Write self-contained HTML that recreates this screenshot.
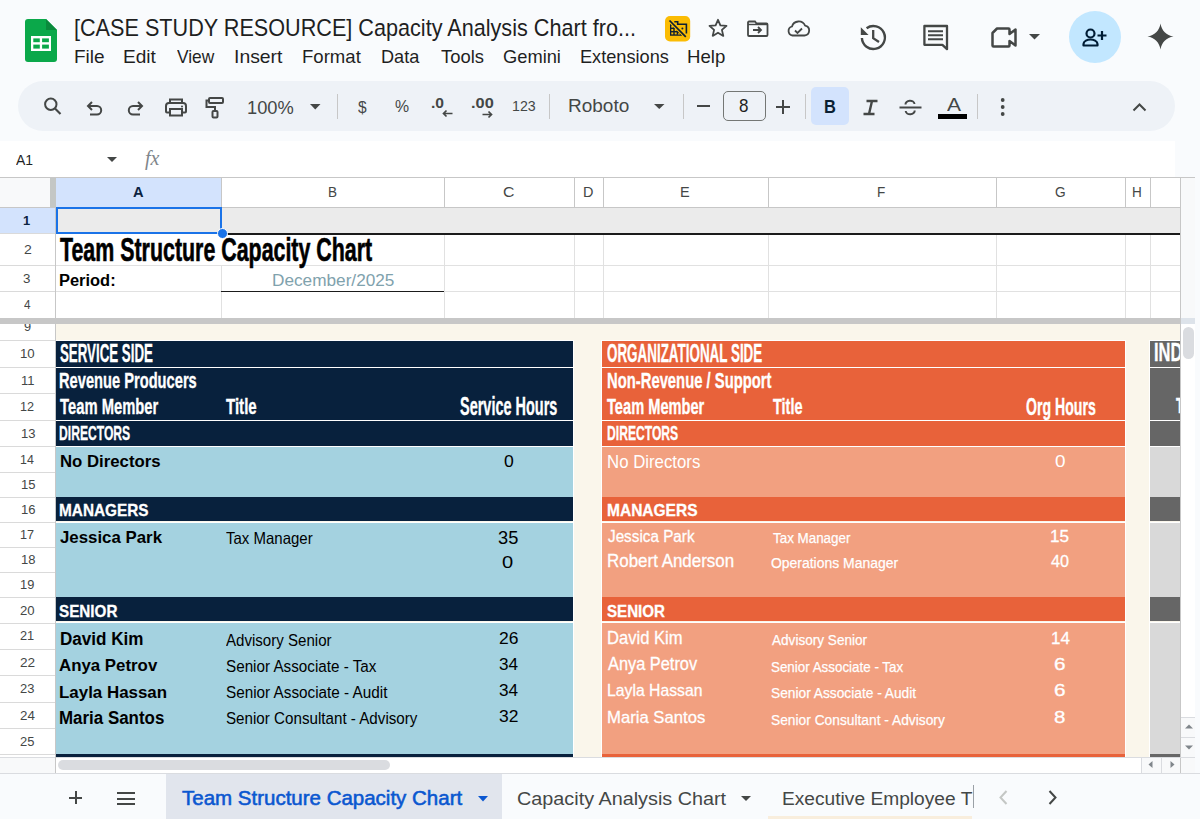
<!DOCTYPE html><html><head><meta charset='utf-8'><title>Sheets</title><style>
*{margin:0;padding:0;box-sizing:border-box}
html,body{width:1200px;height:819px;overflow:hidden;background:#f9fbfd;font-family:"Liberation Sans", sans-serif;position:relative}
.a{position:absolute}
.t{position:absolute;white-space:nowrap;line-height:1;transform-origin:0 0}
svg{position:absolute;overflow:visible}
</style></head><body>
<svg style='left:25px;top:19px' width='32' height='43' viewBox='0 0 32 43'>
<path d='M3 0 H21 L32 11 V40 a3 3 0 0 1 -3 3 H3 a3 3 0 0 1 -3 -3 V3 a3 3 0 0 1 3 -3z' fill='#0ba84a'/>
<path d='M21 0 L32 11 H21z' fill='#0a8a3c'/>
<rect x='6' y='17' width='20' height='15' fill='#fff'/>
<rect x='8.3' y='19.4' width='6.5' height='3.8' fill='#0ba84a'/><rect x='17.1' y='19.4' width='6.8' height='3.8' fill='#0ba84a'/>
<rect x='8.3' y='25.6' width='6.5' height='4' fill='#0ba84a'/><rect x='17.1' y='25.6' width='6.8' height='4' fill='#0ba84a'/>
</svg>
<div class='t' style='left:73.69px;top:15.54px;font-size:23.84px;color:#1f1f1f;font-weight:normal;transform:scaleX(0.9074);'>[CASE STUDY RESOURCE] Capacity Analysis Chart fro...</div>
<div class='t' style='left:74.26px;top:48.19px;font-size:18.60px;color:#1f1f1f;font-weight:normal;transform:scaleX(1.0214);'>File</div>
<div class='t' style='left:123.47px;top:48.19px;font-size:18.60px;color:#1f1f1f;font-weight:normal;transform:scaleX(1.0262);'>Edit</div>
<div class='t' style='left:176.70px;top:48.19px;font-size:18.60px;color:#1f1f1f;font-weight:normal;transform:scaleX(0.9324);'>View</div>
<div class='t' style='left:233.65px;top:48.19px;font-size:18.60px;color:#1f1f1f;font-weight:normal;transform:scaleX(1.0416);'>Insert</div>
<div class='t' style='left:301.50px;top:48.19px;font-size:18.60px;color:#1f1f1f;font-weight:normal;transform:scaleX(0.9984);'>Format</div>
<div class='t' style='left:380.74px;top:48.19px;font-size:18.60px;color:#1f1f1f;font-weight:normal;transform:scaleX(0.9746);'>Data</div>
<div class='t' style='left:440.63px;top:48.19px;font-size:18.60px;color:#1f1f1f;font-weight:normal;transform:scaleX(0.9901);'>Tools</div>
<div class='t' style='left:503.09px;top:48.19px;font-size:18.60px;color:#1f1f1f;font-weight:normal;transform:scaleX(0.9835);'>Gemini</div>
<div class='t' style='left:579.74px;top:48.19px;font-size:18.60px;color:#1f1f1f;font-weight:normal;transform:scaleX(0.9771);'>Extensions</div>
<div class='t' style='left:687.32px;top:48.19px;font-size:18.60px;color:#1f1f1f;font-weight:normal;transform:scaleX(1.0008);'>Help</div>
<svg style='left:665px;top:15.8px' width='25.2' height='25.4' viewBox='0 0 25.2 25.4'><rect x='0' y='0' width='25.2' height='25.4' rx='5' fill='#fbbc04'/><path d='M5 7.6V19.8H17.2z' fill='#0f1f33'/><g fill='#fbbc04'><rect x='6.3' y='9.6' width='2' height='2'/><rect x='6.3' y='13' width='2' height='2'/><rect x='9.7' y='13' width='2' height='2'/><rect x='6.3' y='16.4' width='2' height='2'/><rect x='9.7' y='16.4' width='2' height='2'/><path d='M12.6 18.4h2.8l-1.4-1.8z'/></g><path d='M3.8 4.8L21 21' stroke='#fbbc04' stroke-width='2.6'/><path d='M4.5 4.5L20.8 20.8' stroke='#0f1f33' stroke-width='1.7'/><path d='M9.3 5.7H12.7V8.3H21.4V17.6' fill='none' stroke='#0f1f33' stroke-width='1.6'/><circle cx='17.4' cy='12.5' r='1' fill='#0f1f33'/></svg>
<svg style='left:708px;top:18px' width='20' height='20' viewBox='0 0 20 20'><path d='M10 1.8 L12.4 7.4 L18.5 7.9 L13.9 11.9 L15.3 17.9 L10 14.7 L4.7 17.9 L6.1 11.9 L1.5 7.9 L7.6 7.4z' fill='none' stroke='#444746' stroke-width='1.8' stroke-linejoin='round'/></svg>
<svg style='left:747px;top:20px' width='22' height='17' viewBox='0 0 22 17'><path d='M2 1.5h6l1.5 2h10a1 1 0 0 1 1 1V15a1 1 0 0 1-1 1H2a1 1 0 0 1-1-1V2.5a1 1 0 0 1 1-1z' fill='none' stroke='#444746' stroke-width='1.8'/><path d='M1 4.5h19' stroke='#444746' stroke-width='1.4'/><path d='M6 10h8M11 7l3 3-3 3' fill='none' stroke='#444746' stroke-width='1.8'/></svg>
<svg style='left:786px;top:20px' width='25' height='17' viewBox='0 0 25 17'><path d='M6.5 15.5h12a5 5 0 0 0 .6-9.9A7 7 0 0 0 6 6.5a4.6 4.6 0 0 0 .5 9z' fill='none' stroke='#444746' stroke-width='1.8' stroke-linejoin='round'/><path d='M9 10.5l2.5 2.5 4.5-4.5' fill='none' stroke='#444746' stroke-width='1.8'/></svg>
<svg style='left:859px;top:23px' width='28' height='28' viewBox='0 0 28 28'><path d='M2.9 15A11.5 11.5 0 1 0 7.6 5.2' fill='none' stroke='#444746' stroke-width='2.4'/><path d='M1.8 4.2V12H9.6z' fill='#444746'/><path d='M14.2 7V15.2l5.8 3.8' fill='none' stroke='#444746' stroke-width='2.3'/></svg>
<svg style='left:922px;top:24px' width='27' height='27' viewBox='0 0 27 27'><path d='M2.4 2H25V25.2L20.4 20.8H2.4z' fill='none' stroke='#444746' stroke-width='2.3' stroke-linejoin='round'/><path d='M6 7.2h15M6 11.2h15M6 15.2h15' stroke='#444746' stroke-width='2'/></svg>
<svg style='left:991px;top:27px' width='27' height='21' viewBox='0 0 27 21'><path d='M6 1.5h11.5a1 1 0 0 1 1 1V7l6-4.5V18.5l-6-4.5v4.5a1 1 0 0 1-1 1H2.5a1 1 0 0 1-1-1V6z' fill='none' stroke='#444746' stroke-width='2.5' stroke-linejoin='round'/></svg>
<svg style='left:1029px;top:34px' width='11' height='6' viewBox='0 0 11 6'><path d='M0 0h11L5.5 5.5z' fill='#444746'/></svg>
<div class='a' style='left:1068.5px;top:11px;width:52px;height:52px;border-radius:50%;background:#c2e7ff'></div>
<svg style='left:1082px;top:28px' width='26' height='20' viewBox='0 0 26 20'><circle cx='8.5' cy='5.5' r='4' fill='none' stroke='#001d35' stroke-width='2.2'/><path d='M1.5 17.5v-1.5c0-3 4-4.5 7-4.5s7 1.5 7 4.5v1.5z' fill='none' stroke='#001d35' stroke-width='2.2' stroke-linejoin='round'/><path d='M20 3v9M15.5 7.5h9' stroke='#001d35' stroke-width='2.2'/></svg>
<svg style='left:1147px;top:23px' width='27' height='27' viewBox='0 0 27 27'><path d='M13.5 0.5C14.5 7.5 19.5 12.5 26.5 13.5C19.5 14.5 14.5 19.5 13.5 26.5C12.5 19.5 7.5 14.5 0.5 13.5C7.5 12.5 12.5 7.5 13.5 0.5z' fill='#444746'/></svg>
<div class='a' style='left:18px;top:81px;width:1157px;height:50px;border-radius:25px;background:#eef2f7'></div>
<svg style='left:42px;top:96px' width='20' height='20' viewBox='0 0 20 20'><circle cx='8.8' cy='8.2' r='5.7' fill='none' stroke='#444746' stroke-width='2'/><path d='M13 12.5L18.5 18' stroke='#444746' stroke-width='2.1'/></svg>
<svg style='left:86px;top:100px' width='18' height='16' viewBox='0 0 18 16'><path d='M2.5 6H11a4.2 4.2 0 0 1 0 8.4H4' fill='none' stroke='#444746' stroke-width='2'/><path d='M6 2L2 6l4 4' fill='none' stroke='#444746' stroke-width='2'/></svg>
<svg style='left:126px;top:100px' width='18' height='16' viewBox='0 0 18 16'><path d='M15.5 6H7a4.2 4.2 0 0 0 0 8.4H14' fill='none' stroke='#444746' stroke-width='2'/><path d='M12 2l4 4-4 4' fill='none' stroke='#444746' stroke-width='2'/></svg>
<svg style='left:165px;top:98px' width='22' height='19' viewBox='0 0 22 19'><path d='M5 5V1.5h12V5' fill='none' stroke='#444746' stroke-width='2'/><path d='M4.5 14.5H2a1 1 0 0 1-1-1V8a3 3 0 0 1 3-3h14a3 3 0 0 1 3 3v5.5a1 1 0 0 1-1 1h-2.5' fill='none' stroke='#444746' stroke-width='2'/><rect x='5' y='11' width='12' height='6.5' fill='none' stroke='#444746' stroke-width='2'/><circle cx='17' cy='8.5' r='1' fill='#444746'/></svg>
<svg style='left:205px;top:97px' width='19' height='22' viewBox='0 0 19 22'><rect x='4' y='1' width='14' height='5' rx='1' fill='none' stroke='#444746' stroke-width='2'/><path d='M4 3.5H1.5V10H10V14' fill='none' stroke='#444746' stroke-width='2'/><rect x='7.5' y='14' width='5' height='6.5' rx='1' fill='none' stroke='#444746' stroke-width='2'/></svg>
<div class='t' style='left:247.02px;top:97.69px;font-size:19.19px;color:#444746;font-weight:normal;transform:scaleX(0.9533);'>100%</div>
<svg style='left:310px;top:103.5px' width='10.5' height='6' viewBox='0 0 10.5 6'><path d='M0 0h10.5L5.25 5.5z' fill='#444746'/></svg>
<div class='a' style='left:336.5px;top:94px;width:1px;height:25px;background:#c7c7c7;'></div>
<div class='a' style='left:549.0px;top:94px;width:1px;height:25px;background:#c7c7c7;'></div>
<div class='a' style='left:683.0px;top:94px;width:1px;height:25px;background:#c7c7c7;'></div>
<div class='a' style='left:805.0px;top:94px;width:1px;height:25px;background:#c7c7c7;'></div>
<div class='a' style='left:977.0px;top:94px;width:1px;height:25px;background:#c7c7c7;'></div>
<div class='t' style='left:357.82px;top:99.36px;font-size:16.05px;color:#444746;font-weight:normal;transform:scaleX(0.9673);'>$</div>
<div class='t' style='left:394.65px;top:97.86px;font-size:16.29px;color:#444746;font-weight:normal;transform:scaleX(0.9735);'>%</div>
<div class='t' style='left:430.81px;top:96.16px;font-size:14.29px;color:#444746;font-weight:bold;transform:scaleX(1.0961);'>.0</div>
<svg style='left:442px;top:110px' width='11' height='7' viewBox='0 0 11 7'><path d='M10.5 3.5H1.5M4.5 0.5l-3 3 3 3' fill='none' stroke='#444746' stroke-width='1.7'/></svg>
<div class='t' style='left:470.94px;top:96.16px;font-size:14.29px;color:#444746;font-weight:bold;transform:scaleX(1.1440);'>.00</div>
<svg style='left:482px;top:110.5px' width='11' height='7' viewBox='0 0 11 7'><path d='M0.5 3.5H9.5M6.5 0.5l3 3-3 3' fill='none' stroke='#444746' stroke-width='1.7'/></svg>
<div class='t' style='left:511.94px;top:98.66px;font-size:14.29px;color:#444746;font-weight:normal;transform:scaleX(0.9935);'>123</div>
<div class='t' style='left:568.46px;top:96.56px;font-size:18.17px;color:#444746;font-weight:normal;transform:scaleX(1.0465);'>Roboto</div>
<svg style='left:654px;top:103.5px' width='10.5' height='5' viewBox='0 0 10.5 5'><path d='M0 0h10.5L5.25 5z' fill='#444746'/></svg>
<div class='a' style='left:697px;top:104.5px;width:13px;height:2px;background:#444746;'></div>
<div class='a' style='left:723px;top:91px;width:43px;height:29.5px;border:1px solid #747775;border-radius:5px'></div>
<div class='t' style='left:739.23px;top:96.71px;font-size:18.57px;color:#1f1f1f;font-weight:normal;transform:scaleX(0.9165);'>8</div>
<div class='a' style='left:776px;top:106px;width:14px;height:2px;background:#444746;'></div>
<div class='a' style='left:782px;top:100px;width:2px;height:14px;background:#444746;'></div>
<div class='a' style='left:811px;top:87px;width:38px;height:38px;border-radius:5px;background:#d3e3fd'></div>
<div class='t' style='left:823.88px;top:97.56px;font-size:18.17px;color:#0b1f33;font-weight:bold;transform:scaleX(0.9064);'>B</div>
<svg style='left:862px;top:99px' width='17' height='17' viewBox='0 0 17 17'><path d='M4.5 2h11M1.5 15h11M10 2L7 15' fill='none' stroke='#444746' stroke-width='2.4'/></svg>
<svg style='left:899px;top:99px' width='23' height='18' viewBox='0 0 23 18'><path d='M0.5 8.5h22' stroke='#444746' stroke-width='2'/><path d='M6.5 5.5a4.5 3.5 0 0 1 9-0.5M15.7 11.5a4.5 3.5 0 0 1-9 0.5' fill='none' stroke='#444746' stroke-width='2'/></svg>
<div class='t' style='left:947.00px;top:97.17px;font-size:17.44px;color:#444746;font-weight:normal;transform:scaleX(1.2070);'>A</div>
<div class='a' style='left:938px;top:113.5px;width:29px;height:5.5px;background:#000;'></div>
<svg style='left:1000px;top:97px' width='6' height='20' viewBox='0 0 6 20'><circle cx='2.7' cy='3' r='1.9' fill='#444746'/><circle cx='2.7' cy='10' r='1.9' fill='#444746'/><circle cx='2.7' cy='17' r='1.9' fill='#444746'/></svg>
<svg style='left:1132px;top:103px' width='15' height='9' viewBox='0 0 15 9'><path d='M1.5 7.5l6-6 6 6' fill='none' stroke='#444746' stroke-width='2'/></svg>
<div class='a' style='left:0px;top:141px;width:1175px;height:36px;background:#ffffff;'></div>
<div class='t' style='left:15.80px;top:152.72px;font-size:14.10px;color:#1f1f1f;font-weight:normal;transform:scaleX(0.9902);'>A1</div>
<svg style='left:106.5px;top:157px' width='10' height='5.5' viewBox='0 0 10 5.5'><path d='M0 0h10L5 5z' fill='#444746'/></svg>
<div class='t' style='left:145px;top:148px;font-family:"Liberation Serif",serif;font-style:italic;font-size:20px;color:#80868b'>fx</div>
<div class='a' style='left:0px;top:177px;width:1195px;height:1px;background:#c7c7c7;'></div>
<div class='a' style='left:0px;top:178px;width:1180px;height:29px;background:#ffffff;'></div>
<div class='a' style='left:0px;top:178px;width:50px;height:29px;background:#f8f9fa;'></div>
<div class='a' style='left:50px;top:178px;width:6px;height:29px;background:#c4c7c5;'></div>
<div class='a' style='left:56px;top:178px;width:165px;height:29px;background:#d3e3fd;'></div>
<div class='a' style='left:220.5px;top:178px;width:1px;height:29px;background:#c7c7c7;'></div>
<div class='a' style='left:443.5px;top:178px;width:1px;height:29px;background:#c7c7c7;'></div>
<div class='a' style='left:573.5px;top:178px;width:1px;height:29px;background:#c7c7c7;'></div>
<div class='a' style='left:602.5px;top:178px;width:1px;height:29px;background:#c7c7c7;'></div>
<div class='a' style='left:767.5px;top:178px;width:1px;height:29px;background:#c7c7c7;'></div>
<div class='a' style='left:995.5px;top:178px;width:1px;height:29px;background:#c7c7c7;'></div>
<div class='a' style='left:1124.5px;top:178px;width:1px;height:29px;background:#c7c7c7;'></div>
<div class='a' style='left:1149.5px;top:178px;width:1px;height:29px;background:#c7c7c7;'></div>
<div class='a' style='left:1179.5px;top:178px;width:1px;height:29px;background:#c7c7c7;'></div>
<div class='a' style='left:0px;top:207px;width:1180px;height:1px;background:#c7c7c7;'></div>
<div class='a' style='left:1180px;top:178px;width:15px;height:579px;background:#f8f9fa;'></div>
<div class='a' style='left:1180px;top:177px;width:1px;height:580px;background:#c7c7c7;'></div>
<div class='a' style='left:0px;top:208px;width:55px;height:549px;background:#ffffff;'></div>
<div class='a' style='left:55px;top:208px;width:1px;height:549px;background:#c7c7c7;'></div>
<div class='a' style='left:0px;top:208px;width:55px;height:25.5px;background:#d3e3fd;'></div>
<div class='a' style='left:56px;top:208px;width:1124px;height:25px;background:#ebebeb;'></div>
<div class='a' style='left:56px;top:233.5px;width:1124px;height:85px;background:#ffffff;'></div>
<div class='a' style='left:0px;top:233.0px;width:55px;height:1px;background:#dadada;'></div>
<div class='a' style='left:0px;top:264.5px;width:55px;height:1px;background:#dadada;'></div>
<div class='a' style='left:0px;top:291.0px;width:55px;height:1px;background:#dadada;'></div>
<div class='a' style='left:56px;top:264.5px;width:1124px;height:1px;background:#e1e1e1;'></div>
<div class='a' style='left:56px;top:291.0px;width:1124px;height:1px;background:#e1e1e1;'></div>
<div class='a' style='left:443.5px;top:235px;width:1px;height:83px;background:#e1e1e1;'></div>
<div class='a' style='left:573.5px;top:235px;width:1px;height:83px;background:#e1e1e1;'></div>
<div class='a' style='left:602.5px;top:235px;width:1px;height:83px;background:#e1e1e1;'></div>
<div class='a' style='left:767.5px;top:235px;width:1px;height:83px;background:#e1e1e1;'></div>
<div class='a' style='left:995.5px;top:235px;width:1px;height:83px;background:#e1e1e1;'></div>
<div class='a' style='left:1124.5px;top:235px;width:1px;height:83px;background:#e1e1e1;'></div>
<div class='a' style='left:1149.5px;top:235px;width:1px;height:83px;background:#e1e1e1;'></div>
<div class='a' style='left:220.5px;top:265px;width:1px;height:53px;background:#e1e1e1;'></div>
<div class='a' style='left:221px;top:232.5px;width:959px;height:2px;background:#1b1b1b;'></div>
<div class='a' style='left:221px;top:290.5px;width:223px;height:1.6px;background:#1b1b1b;'></div>
<div class='a' style='left:0px;top:318px;width:1180px;height:6px;background:#c7c7c7;'></div>
<div class='a' style='left:1181px;top:318px;width:14px;height:6px;background:#dde3ea;'></div>
<div class='a' style='left:56px;top:324px;width:1124px;height:433px;background:#faf6eb;'></div>
<div class='a' style='left:1181px;top:324px;width:14px;height:433px;background:#ffffff;'></div>
<div class='a' style='left:0px;top:340.0px;width:55px;height:1px;background:#dadada;'></div>
<div class='a' style='left:0px;top:366.5px;width:55px;height:1px;background:#dadada;'></div>
<div class='a' style='left:0px;top:393.0px;width:55px;height:1px;background:#dadada;'></div>
<div class='a' style='left:0px;top:419.5px;width:55px;height:1px;background:#dadada;'></div>
<div class='a' style='left:0px;top:446.0px;width:55px;height:1px;background:#dadada;'></div>
<div class='a' style='left:0px;top:471.5px;width:55px;height:1px;background:#dadada;'></div>
<div class='a' style='left:0px;top:496.5px;width:55px;height:1px;background:#dadada;'></div>
<div class='a' style='left:0px;top:522.0px;width:55px;height:1px;background:#dadada;'></div>
<div class='a' style='left:0px;top:547.0px;width:55px;height:1px;background:#dadada;'></div>
<div class='a' style='left:0px;top:572.0px;width:55px;height:1px;background:#dadada;'></div>
<div class='a' style='left:0px;top:597.0px;width:55px;height:1px;background:#dadada;'></div>
<div class='a' style='left:0px;top:622.5px;width:55px;height:1px;background:#dadada;'></div>
<div class='a' style='left:0px;top:648.5px;width:55px;height:1px;background:#dadada;'></div>
<div class='a' style='left:0px;top:675.0px;width:55px;height:1px;background:#dadada;'></div>
<div class='a' style='left:0px;top:701.5px;width:55px;height:1px;background:#dadada;'></div>
<div class='a' style='left:0px;top:728.0px;width:55px;height:1px;background:#dadada;'></div>
<div class='a' style='left:0px;top:754.0px;width:55px;height:1px;background:#dadada;'></div>
<div class='t' style='left:23.19px;top:215.28px;font-size:12.79px;color:#0b2341;font-weight:bold;transform:scaleX(1.0088);'>1</div>
<div class='t' style='left:23.54px;top:243.78px;font-size:12.79px;color:#444746;font-weight:normal;transform:scaleX(1.0983);'>2</div>
<div class='t' style='left:23.29px;top:272.78px;font-size:12.79px;color:#444746;font-weight:normal;transform:scaleX(1.0413);'>3</div>
<div class='t' style='left:23.87px;top:299.28px;font-size:12.79px;color:#444746;font-weight:normal;transform:scaleX(0.9193);'>4</div>
<div class='a' style='left:0;top:324px;width:55px;height:16px;overflow:hidden'><div class='t' style='left:23.95px;top:-3.23px;font-size:12.8px;color:#444746'>9</div></div>
<div class='t' style='left:20.42px;top:348.28px;font-size:12.79px;color:#444746;font-weight:normal;transform:scaleX(1.0349);'>10</div>
<div class='t' style='left:20.63px;top:374.78px;font-size:12.79px;color:#444746;font-weight:normal;transform:scaleX(1.0150);'>11</div>
<div class='t' style='left:19.86px;top:401.28px;font-size:12.79px;color:#444746;font-weight:normal;transform:scaleX(0.9890);'>12</div>
<div class='t' style='left:20.56px;top:427.78px;font-size:12.79px;color:#444746;font-weight:normal;transform:scaleX(1.0194);'>13</div>
<div class='t' style='left:20.34px;top:453.78px;font-size:12.79px;color:#444746;font-weight:normal;transform:scaleX(0.9696);'>14</div>
<div class='t' style='left:20.56px;top:479.03px;font-size:12.79px;color:#444746;font-weight:normal;transform:scaleX(1.0194);'>15</div>
<div class='t' style='left:20.56px;top:504.28px;font-size:12.79px;color:#444746;font-weight:normal;transform:scaleX(1.0194);'>16</div>
<div class='t' style='left:19.86px;top:528.53px;font-size:12.79px;color:#444746;font-weight:normal;transform:scaleX(0.9890);'>17</div>
<div class='t' style='left:20.56px;top:553.53px;font-size:12.79px;color:#444746;font-weight:normal;transform:scaleX(1.0194);'>18</div>
<div class='t' style='left:19.72px;top:578.53px;font-size:12.79px;color:#444746;font-weight:normal;transform:scaleX(1.0041);'>19</div>
<div class='t' style='left:20.10px;top:604.78px;font-size:12.79px;color:#444746;font-weight:normal;transform:scaleX(1.0287);'>20</div>
<div class='t' style='left:20.38px;top:629.53px;font-size:12.79px;color:#444746;font-weight:normal;transform:scaleX(0.9989);'>21</div>
<div class='t' style='left:20.47px;top:656.78px;font-size:12.79px;color:#444746;font-weight:normal;transform:scaleX(1.0662);'>22</div>
<div class='t' style='left:20.24px;top:683.28px;font-size:12.79px;color:#444746;font-weight:normal;transform:scaleX(1.0137);'>23</div>
<div class='t' style='left:19.96px;top:709.78px;font-size:12.79px;color:#444746;font-weight:normal;transform:scaleX(1.0438);'>24</div>
<div class='t' style='left:20.24px;top:736.03px;font-size:12.79px;color:#444746;font-weight:normal;transform:scaleX(1.0137);'>25</div>
<div class='t' style='left:132.75px;top:185.12px;font-size:14.10px;color:#0b2341;font-weight:bold;transform:scaleX(1.0406);'>A</div>
<div class='t' style='left:327.78px;top:185.12px;font-size:14.10px;color:#444746;font-weight:normal;transform:scaleX(0.9579);'>B</div>
<div class='t' style='left:503.19px;top:185.12px;font-size:14.10px;color:#444746;font-weight:normal;transform:scaleX(1.1212);'>C</div>
<div class='t' style='left:583.02px;top:185.12px;font-size:14.10px;color:#444746;font-weight:normal;transform:scaleX(1.0249);'>D</div>
<div class='t' style='left:680.39px;top:185.12px;font-size:14.10px;color:#444746;font-weight:normal;transform:scaleX(1.0287);'>E</div>
<div class='t' style='left:877.11px;top:185.12px;font-size:14.10px;color:#444746;font-weight:normal;transform:scaleX(0.9613);'>F</div>
<div class='t' style='left:1054.86px;top:185.12px;font-size:14.10px;color:#444746;font-weight:normal;transform:scaleX(0.9723);'>G</div>
<div class='t' style='left:1132.13px;top:185.12px;font-size:14.10px;color:#444746;font-weight:normal;transform:scaleX(0.9613);'>H</div>
<div class='a' style='left:56px;top:207px;width:166px;height:27px;border:2.5px solid #1a73e8'></div>
<div class='a' style='left:216.5px;top:228px;width:11px;height:11px;border-radius:50%;background:#1a73e8;border:1px solid #fff'></div>
<div class='t' style='left:59.79px;top:231.79px;font-size:34.01px;color:#000;font-weight:bold;transform:scaleX(0.6290);-webkit-text-stroke:0.6px #000;'>Team Structure Capacity Chart</div>
<div class='t' style='left:58.73px;top:271.89px;font-size:16.13px;color:#000;font-weight:bold;transform:scaleX(1.0204);'>Period:</div>
<div class='t' style='left:271.62px;top:272.82px;font-size:16.57px;color:#7fa2ad;font-weight:normal;transform:scaleX(1.0388);'>December/2025</div>
<div class='a' style='left:56px;top:340px;width:517px;height:1px;background:#ffffff;'></div>
<div class='a' style='left:56px;top:341px;width:517px;height:25.5px;background:#08213d;'></div>
<div class='a' style='left:56px;top:366.5px;width:517px;height:1.5px;background:#ffffff;'></div>
<div class='a' style='left:56px;top:368px;width:517px;height:51.5px;background:#08213d;'></div>
<div class='a' style='left:56px;top:419.5px;width:517px;height:1.5px;background:#ffffff;'></div>
<div class='a' style='left:56px;top:421px;width:517px;height:24.8px;background:#08213d;'></div>
<div class='a' style='left:56px;top:445.8px;width:517px;height:1.4px;background:#ffffff;'></div>
<div class='a' style='left:56px;top:447.2px;width:517px;height:49.4px;background:#a4d2e0;'></div>
<div class='a' style='left:56px;top:496.6px;width:517px;height:24.9px;background:#08213d;'></div>
<div class='a' style='left:56px;top:521.5px;width:517px;height:1.5px;background:#ffffff;'></div>
<div class='a' style='left:56px;top:523px;width:517px;height:74.3px;background:#a4d2e0;'></div>
<div class='a' style='left:56px;top:597.3px;width:517px;height:24.2px;background:#08213d;'></div>
<div class='a' style='left:56px;top:621.5px;width:517px;height:1.5px;background:#ffffff;'></div>
<div class='a' style='left:56px;top:623px;width:517px;height:131.3px;background:#a4d2e0;'></div>
<div class='a' style='left:56px;top:754.3px;width:517px;height:2.7px;background:#08213d;'></div>
<div class='a' style='left:573px;top:340px;width:1px;height:417px;background:#ffffff;'></div>
<div class='a' style='left:602px;top:340px;width:522.5px;height:1px;background:#ffffff;'></div>
<div class='a' style='left:602px;top:341px;width:522.5px;height:25.5px;background:#e8623a;'></div>
<div class='a' style='left:602px;top:366.5px;width:522.5px;height:1.5px;background:#ffffff;'></div>
<div class='a' style='left:602px;top:368px;width:522.5px;height:51.5px;background:#e8623a;'></div>
<div class='a' style='left:602px;top:419.5px;width:522.5px;height:1.5px;background:#ffffff;'></div>
<div class='a' style='left:602px;top:421px;width:522.5px;height:24.8px;background:#e8623a;'></div>
<div class='a' style='left:602px;top:445.8px;width:522.5px;height:1.4px;background:#ffffff;'></div>
<div class='a' style='left:602px;top:447.2px;width:522.5px;height:49.4px;background:#f2a080;'></div>
<div class='a' style='left:602px;top:496.6px;width:522.5px;height:24.9px;background:#e8623a;'></div>
<div class='a' style='left:602px;top:521.5px;width:522.5px;height:1.5px;background:#ffffff;'></div>
<div class='a' style='left:602px;top:523px;width:522.5px;height:74.3px;background:#f2a080;'></div>
<div class='a' style='left:602px;top:597.3px;width:522.5px;height:24.2px;background:#e8623a;'></div>
<div class='a' style='left:602px;top:621.5px;width:522.5px;height:1.5px;background:#ffffff;'></div>
<div class='a' style='left:602px;top:623px;width:522.5px;height:131.3px;background:#f2a080;'></div>
<div class='a' style='left:602px;top:754.3px;width:522.5px;height:2.7px;background:#e8623a;'></div>
<div class='a' style='left:1124.5px;top:340px;width:1px;height:417px;background:#ffffff;'></div>
<div class='a' style='left:601px;top:340px;width:1px;height:417px;background:#ffffff;'></div>
<div class='a' style='left:1149px;top:340px;width:1px;height:417px;background:#ffffff;'></div>
<div class='a' style='left:1150px;top:340px;width:30px;height:1px;background:#ffffff;'></div>
<div class='a' style='left:1150px;top:341px;width:30px;height:25.5px;background:#666666;'></div>
<div class='a' style='left:1150px;top:366.5px;width:30px;height:1.5px;background:#ffffff;'></div>
<div class='a' style='left:1150px;top:368px;width:30px;height:51.5px;background:#666666;'></div>
<div class='a' style='left:1150px;top:419.5px;width:30px;height:1.5px;background:#ffffff;'></div>
<div class='a' style='left:1150px;top:421px;width:30px;height:24.8px;background:#666666;'></div>
<div class='a' style='left:1150px;top:445.8px;width:30px;height:1.4px;background:#ffffff;'></div>
<div class='a' style='left:1150px;top:447.2px;width:30px;height:49.4px;background:#d9d9d9;'></div>
<div class='a' style='left:1150px;top:496.6px;width:30px;height:24.9px;background:#666666;'></div>
<div class='a' style='left:1150px;top:521.5px;width:30px;height:1.5px;background:#ffffff;'></div>
<div class='a' style='left:1150px;top:523px;width:30px;height:74.3px;background:#d9d9d9;'></div>
<div class='a' style='left:1150px;top:597.3px;width:30px;height:24.2px;background:#666666;'></div>
<div class='a' style='left:1150px;top:621.5px;width:30px;height:1.5px;background:#ffffff;'></div>
<div class='a' style='left:1150px;top:623px;width:30px;height:131.3px;background:#d9d9d9;'></div>
<div class='a' style='left:1150px;top:754.3px;width:30px;height:2.7px;background:#666666;'></div>
<div class='t' style='left:59.60px;top:341.33px;font-size:25.15px;color:#ffffff;font-weight:bold;transform:scaleX(0.5292);-webkit-text-stroke:0.35px #fff;'>SERVICE SIDE</div>
<div class='t' style='left:59.05px;top:369.97px;font-size:21.80px;color:#ffffff;font-weight:bold;transform:scaleX(0.6728);-webkit-text-stroke:0.35px #fff;'>Revenue Producers</div>
<div class='t' style='left:59.85px;top:395.85px;font-size:22.53px;color:#ffffff;font-weight:bold;transform:scaleX(0.6566);-webkit-text-stroke:0.35px #fff;'>Team Member</div>
<div class='t' style='left:225.85px;top:395.85px;font-size:22.53px;color:#ffffff;font-weight:bold;transform:scaleX(0.6692);-webkit-text-stroke:0.35px #fff;'>Title</div>
<div class='t' style='left:460.36px;top:394.67px;font-size:24.85px;color:#ffffff;font-weight:bold;transform:scaleX(0.5828);-webkit-text-stroke:0.35px #fff;'>Service Hours</div>
<div class='t' style='left:59.21px;top:423.21px;font-size:20.93px;color:#ffffff;font-weight:bold;transform:scaleX(0.5796);-webkit-text-stroke:0.35px #fff;'>DIRECTORS</div>
<div class='t' style='left:59.91px;top:452.75px;font-size:17.01px;color:#000;font-weight:bold;transform:scaleX(0.9856);'>No Directors</div>
<div class='t' style='left:503.67px;top:453.94px;font-size:15.71px;color:#000;font-weight:normal;transform:scaleX(1.1191);'>0</div>
<div class='t' style='left:59.01px;top:501.75px;font-size:17.01px;color:#ffffff;font-weight:bold;transform:scaleX(0.9031);-webkit-text-stroke:0.3px #fff;'>MANAGERS</div>
<div class='t' style='left:59.54px;top:529.59px;font-size:16.72px;color:#000;font-weight:bold;transform:scaleX(1.0076);'>Jessica Park</div>
<div class='t' style='left:225.90px;top:531.39px;font-size:16.72px;color:#000;font-weight:normal;transform:scaleX(0.8977);'>Tax Manager</div>
<div class='t' style='left:498.46px;top:529.66px;font-size:17.57px;color:#000;font-weight:normal;transform:scaleX(1.0395);'>35</div>
<div class='t' style='left:502.39px;top:553.71px;font-size:17.29px;color:#000;font-weight:normal;transform:scaleX(1.1617);'>0</div>
<div class='t' style='left:59.33px;top:602.76px;font-size:16.28px;color:#ffffff;font-weight:bold;transform:scaleX(0.9362);-webkit-text-stroke:0.3px #fff;'>SENIOR</div>
<div class='t' style='left:59.69px;top:630.97px;font-size:17.44px;color:#000;font-weight:bold;transform:scaleX(0.9794);'>David Kim</div>
<div class='t' style='left:226.20px;top:631.54px;font-size:16.42px;color:#000;font-weight:normal;transform:scaleX(0.9188);'>Advisory Senior</div>
<div class='t' style='left:499.30px;top:629.88px;font-size:16.14px;color:#000;font-weight:normal;transform:scaleX(1.0824);'>26</div>
<div class='t' style='left:59.37px;top:657.89px;font-size:16.72px;color:#000;font-weight:bold;transform:scaleX(1.0081);'>Anya Petrov</div>
<div class='t' style='left:225.51px;top:659.47px;font-size:16.86px;color:#000;font-weight:normal;transform:scaleX(0.9036);'>Senior Associate - Tax</div>
<div class='t' style='left:498.53px;top:655.94px;font-size:16.43px;color:#000;font-weight:normal;transform:scaleX(1.0432);'>34</div>
<div class='t' style='left:58.70px;top:684.12px;font-size:17.15px;color:#000;font-weight:bold;transform:scaleX(0.9865);'>Layla Hassan</div>
<div class='t' style='left:225.51px;top:684.20px;font-size:17.30px;color:#000;font-weight:normal;transform:scaleX(0.8846);'>Senior Associate - Audit</div>
<div class='t' style='left:498.53px;top:682.28px;font-size:16.14px;color:#000;font-weight:normal;transform:scaleX(1.0616);'>34</div>
<div class='t' style='left:58.70px;top:710.17px;font-size:17.44px;color:#000;font-weight:bold;transform:scaleX(0.9706);'>Maria Santos</div>
<div class='t' style='left:225.52px;top:710.87px;font-size:16.86px;color:#000;font-weight:normal;transform:scaleX(0.8999);'>Senior Consultant - Advisory</div>
<div class='t' style='left:498.52px;top:708.64px;font-size:15.71px;color:#000;font-weight:normal;transform:scaleX(1.1120);'>32</div>
<div class='t' style='left:607.06px;top:341.33px;font-size:25.15px;color:#ffffff;font-weight:bold;transform:scaleX(0.5335);-webkit-text-stroke:0.35px #fff;'>ORGANIZATIONAL SIDE</div>
<div class='t' style='left:606.64px;top:369.97px;font-size:21.80px;color:#ffffff;font-weight:bold;transform:scaleX(0.6792);-webkit-text-stroke:0.35px #fff;'>Non-Revenue / Support</div>
<div class='t' style='left:607.45px;top:395.85px;font-size:22.53px;color:#ffffff;font-weight:bold;transform:scaleX(0.6499);-webkit-text-stroke:0.35px #fff;'>Team Member</div>
<div class='t' style='left:773.26px;top:395.85px;font-size:22.53px;color:#ffffff;font-weight:bold;transform:scaleX(0.6427);-webkit-text-stroke:0.35px #fff;'>Title</div>
<div class='t' style='left:1025.63px;top:395.66px;font-size:23.69px;color:#ffffff;font-weight:bold;transform:scaleX(0.5952);-webkit-text-stroke:0.35px #fff;'>Org Hours</div>
<div class='t' style='left:606.81px;top:423.21px;font-size:20.93px;color:#ffffff;font-weight:bold;transform:scaleX(0.5796);-webkit-text-stroke:0.35px #fff;'>DIRECTORS</div>
<div class='t' style='left:606.66px;top:453.55px;font-size:17.59px;color:#ffffff;font-weight:normal;transform:scaleX(0.9554);'>No Directors</div>
<div class='t' style='left:1054.83px;top:452.58px;font-size:16.14px;color:#ffffff;font-weight:normal;transform:scaleX(1.1696);'>0</div>
<div class='t' style='left:606.99px;top:502.36px;font-size:16.28px;color:#ffffff;font-weight:bold;transform:scaleX(0.9541);-webkit-text-stroke:0.3px #fff;'>MANAGERS</div>
<div class='t' style='left:607.77px;top:528.10px;font-size:17.30px;color:#ffffff;font-weight:normal;transform:scaleX(0.8833);-webkit-text-stroke:0.3px #fff;'>Jessica Park</div>
<div class='t' style='left:772.53px;top:531.07px;font-size:14.39px;color:#ffffff;font-weight:normal;transform:scaleX(0.9317);-webkit-text-stroke:0.25px #fff;'>Tax Manager</div>
<div class='t' style='left:1050.49px;top:527.76px;font-size:16.29px;color:#ffffff;font-weight:normal;transform:scaleX(1.0508);-webkit-text-stroke:0.3px #fff;'>15</div>
<div class='t' style='left:606.64px;top:553.03px;font-size:17.73px;color:#ffffff;font-weight:normal;transform:scaleX(0.9563);-webkit-text-stroke:0.3px #fff;'>Robert Anderson</div>
<div class='t' style='left:771.17px;top:555.60px;font-size:14.83px;color:#ffffff;font-weight:normal;transform:scaleX(0.9401);-webkit-text-stroke:0.25px #fff;'>Operations Manager</div>
<div class='t' style='left:1051.45px;top:553.16px;font-size:16.29px;color:#ffffff;font-weight:normal;transform:scaleX(0.9911);-webkit-text-stroke:0.3px #fff;'>40</div>
<div class='t' style='left:606.67px;top:629.93px;font-size:17.73px;color:#ffffff;font-weight:normal;transform:scaleX(0.9351);-webkit-text-stroke:0.3px #fff;'>David Kim</div>
<div class='t' style='left:771.80px;top:632.50px;font-size:14.83px;color:#ffffff;font-weight:normal;transform:scaleX(0.9155);-webkit-text-stroke:0.25px #fff;'>Advisory Senior</div>
<div class='t' style='left:1050.50px;top:631.32px;font-size:15.86px;color:#ffffff;font-weight:normal;transform:scaleX(1.0685);-webkit-text-stroke:0.3px #fff;'>14</div>
<div class='t' style='left:608.00px;top:656.17px;font-size:17.44px;color:#ffffff;font-weight:normal;transform:scaleX(0.9380);-webkit-text-stroke:0.3px #fff;'>Anya Petrov</div>
<div class='t' style='left:771.20px;top:659.40px;font-size:15.41px;color:#ffffff;font-weight:normal;transform:scaleX(0.8685);-webkit-text-stroke:0.25px #fff;'>Senior Associate - Tax</div>
<div class='t' style='left:1054.39px;top:656.24px;font-size:16.43px;color:#ffffff;font-weight:normal;transform:scaleX(1.2618);-webkit-text-stroke:0.3px #fff;'>6</div>
<div class='t' style='left:606.74px;top:681.95px;font-size:17.01px;color:#ffffff;font-weight:normal;transform:scaleX(0.9266);-webkit-text-stroke:0.3px #fff;'>Layla Hassan</div>
<div class='t' style='left:771.18px;top:685.60px;font-size:14.83px;color:#ffffff;font-weight:normal;transform:scaleX(0.9267);-webkit-text-stroke:0.25px #fff;'>Senior Associate - Audit</div>
<div class='t' style='left:1054.39px;top:681.58px;font-size:16.14px;color:#ffffff;font-weight:normal;transform:scaleX(1.2841);-webkit-text-stroke:0.3px #fff;'>6</div>
<div class='t' style='left:606.66px;top:709.22px;font-size:17.15px;color:#ffffff;font-weight:normal;transform:scaleX(0.9733);-webkit-text-stroke:0.3px #fff;'>Maria Santos</div>
<div class='t' style='left:771.18px;top:711.50px;font-size:15.41px;color:#ffffff;font-weight:normal;transform:scaleX(0.8940);-webkit-text-stroke:0.25px #fff;'>Senior Consultant - Advisory</div>
<div class='t' style='left:1054.44px;top:708.94px;font-size:16.43px;color:#ffffff;font-weight:normal;transform:scaleX(1.2483);-webkit-text-stroke:0.3px #fff;'>8</div>
<div class='t' style='left:606.54px;top:602.94px;font-size:16.42px;color:#ffffff;font-weight:bold;transform:scaleX(0.9215);-webkit-text-stroke:0.3px #fff;'>SENIOR</div>
<div class='a' style='left:1150px;top:340px;width:30px;height:100px;overflow:hidden'>
<div class='t' style='left:4.33px;top:0.13px;font-size:25.15px;color:#fff;font-weight:bold;transform:scaleX(0.6550);-webkit-text-stroke:0.35px #fff'>IND</div>
<div class='t' style='left:26.48px;top:54.85px;font-size:22.53px;color:#fff;font-weight:bold;transform:scaleX(0.5349);-webkit-text-stroke:0.35px #fff'>Title</div>
</div>
<div class='a' style='left:1182.5px;top:326.5px;width:11px;height:32px;border-radius:6px;background:#dadce0'></div>
<div class='a' style='left:1180.5px;top:716.5px;width:14.5px;height:1px;background:#dadce0;'></div>
<div class='a' style='left:1180.5px;top:737px;width:14.5px;height:1px;background:#dadce0;'></div>
<div class='a' style='left:1181px;top:717.5px;width:14px;height:19.5px;background:#f8f9fa;'></div>
<div class='a' style='left:1181px;top:738px;width:14px;height:19px;background:#f8f9fa;'></div>
<svg style='left:1184.5px;top:724px' width='8' height='5' viewBox='0 0 8 5'><path d='M0 4.5L4 0.5L8 4.5z' fill='#80868b'/></svg>
<svg style='left:1184.5px;top:745px' width='8' height='5' viewBox='0 0 8 5'><path d='M0 0.5L4 4.5L8 0.5z' fill='#80868b'/></svg>
<div class='a' style='left:0px;top:757px;width:1195px;height:16px;background:#ffffff;'></div>
<div class='a' style='left:0px;top:757px;width:1195px;height:1px;background:#dadce0;'></div>
<div class='a' style='left:0px;top:758px;width:55px;height:15px;background:#f8f9fa;'></div>
<div class='a' style='left:55px;top:757px;width:1px;height:16px;background:#c7c7c7;'></div>
<div class='a' style='left:58px;top:759.5px;width:332px;height:10.5px;border-radius:5.5px;background:#dadce0'></div>
<div class='a' style='left:1141px;top:758px;width:39px;height:14.5px;background:#f8f9fa;'></div>
<div class='a' style='left:1141px;top:757.5px;width:1px;height:15px;background:#dadce0;'></div>
<div class='a' style='left:1161px;top:757.5px;width:1px;height:15px;background:#dadce0;'></div>
<div class='a' style='left:1180px;top:757.5px;width:1.5px;height:15px;background:#c7c7c7;'></div>
<svg style='left:1148px;top:761px' width='5' height='7' viewBox='0 0 5 7'><path d='M4.5 0L0.5 3.5L4.5 7z' fill='#80868b'/></svg>
<svg style='left:1170px;top:761px' width='5' height='7' viewBox='0 0 5 7'><path d='M0.5 0L4.5 3.5L0.5 7z' fill='#80868b'/></svg>
<div class='a' style='left:1181px;top:758px;width:14px;height:15px;background:#f8f9fa;'></div>
<div class='a' style='left:0px;top:772.5px;width:1195px;height:1px;background:#dadce0;'></div>
<div class='a' style='left:0px;top:773.5px;width:1200px;height:45.5px;background:#f9fbfd;'></div>
<div class='a' style='left:0px;top:773.3px;width:1200px;height:1px;background:#dadce0;'></div>
<div class='a' style='left:69px;top:796.5px;width:13px;height:2px;background:#444746;'></div>
<div class='a' style='left:74.5px;top:791px;width:2px;height:13px;background:#444746;'></div>
<div class='a' style='left:117px;top:792px;width:18px;height:2px;background:#444746;'></div>
<div class='a' style='left:117px;top:797.5px;width:18px;height:2px;background:#444746;'></div>
<div class='a' style='left:117px;top:803px;width:18px;height:2px;background:#444746;'></div>
<div class='a' style='left:166px;top:774px;width:336px;height:45px;background:#e1e5ed;'></div>
<div class='t' style='left:181.99px;top:789.22px;font-size:19.62px;color:#0b57d0;font-weight:normal;transform:scaleX(1.0450);-webkit-text-stroke:0.55px #0b57d0;'>Team Structure Capacity Chart</div>
<svg style='left:477.5px;top:795.5px' width='10' height='5.5' viewBox='0 0 10 5.5'><path d='M0 0h10L5 5.5z' fill='#0b57d0'/></svg>
<div class='t' style='left:517.01px;top:790.00px;font-size:18.53px;color:#444746;font-weight:normal;transform:scaleX(1.0695);'>Capacity Analysis Chart</div>
<svg style='left:741px;top:796px' width='10' height='5' viewBox='0 0 10 5'><path d='M0 0h10L5 5z' fill='#444746'/></svg>
<div class='a' style='left:768px;top:816px;width:204px;height:3px;background:#f9eedd;'></div>
<div class='t' style='left:781.66px;top:790.00px;font-size:18.53px;color:#444746;font-weight:normal;transform:scaleX(1.0353);'>Executive Employee T</div>
<div class='a' style='left:972.5px;top:785px;width:1px;height:23px;background:#9aa0a6;'></div>
<svg style='left:999px;top:790px' width='9' height='15' viewBox='0 0 9 15'><path d='M7.5 1L1.5 7.5L7.5 14' fill='none' stroke='#c4c7c5' stroke-width='2'/></svg>
<svg style='left:1048px;top:790px' width='9' height='15' viewBox='0 0 9 15'><path d='M1.5 1L7.5 7.5L1.5 14' fill='none' stroke='#444746' stroke-width='2'/></svg>
</body></html>
